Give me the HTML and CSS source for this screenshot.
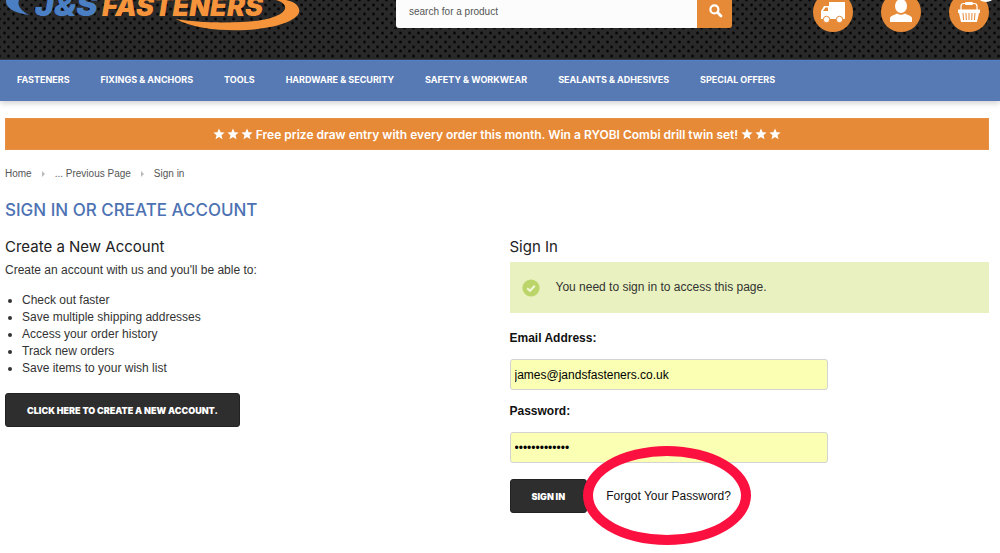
FILE: index.html
```html
<!DOCTYPE html>
<html lang="en">
<head>
<meta charset="utf-8">
<title>J&amp;S Fasteners - Sign in</title>
<meta name="viewport" content="width=device-width, initial-scale=1">
<link rel="stylesheet" href="styles.css">
</head>
<body>
<header class="header">
  <a class="logo" href="#" aria-label="J&amp;S Fasteners">
    <svg width="304" height="34" viewBox="0 0 304 34">
      <path fill="#4a7fc4" d="M6 0C5 7 13 13 29 15C20 10 17 5 19 0Z"/>
      <path fill="#f6943c" d="M276 0C294 5 287 20 242 22C216 23 194 22 176 19C194 29 222 31 246 30C282 28 302 18 299 9C298 4 292 1 286 0Z"/>
      <text class="logo-initials" x="35" y="16" fill="#4a7fc4">J&amp;S</text>
      <text class="logo-name" x="102" y="16" fill="#f6943c">FASTENERS</text>
    </svg>
  </a>
  <form class="search">
    <input class="search-input" type="text" placeholder="search for a product" aria-label="Search for a product">
    <button class="search-button" type="button" aria-label="Search">
      <svg width="14" height="14" viewBox="0 0 14 14"><circle cx="5.400" cy="5.400" r="4" fill="none" stroke="#fff" stroke-width="2.200"/><path d="M8.600 8.600L12 12" stroke="#fff" stroke-width="2.800" stroke-linecap="round"/></svg>
    </button>
  </form>
  <nav class="tools" aria-label="Account">
    <a href="#" aria-label="Delivery"><svg width="40" height="32" viewBox="0 0 40 32">
      <circle cx="20" cy="12" r="20" fill="#e78a37"/>
      <path fill="#fff" d="M16 2H32V19H8V11L11 6H16Z"/><path fill="#e78a37" d="M10 11L12.500 7.500H15V11Z"/>
      <circle cx="13.500" cy="19.500" r="3.200" fill="#fff" stroke="#e78a37"/><circle cx="26.500" cy="19.500" r="3.200" fill="#fff" stroke="#e78a37"/>
    </svg></a>
    <a href="#" aria-label="Account"><svg width="40" height="32" viewBox="0 0 40 32">
      <circle cx="20" cy="12" r="20" fill="#e78a37"/>
      <ellipse cx="20" cy="6" rx="6" ry="7" fill="#fff"/><path fill="#fff" d="M9 22V18C9 16 14 15 16 13.500Q20 16 24 13.500C26 15 31 16 31 18V22Z"/>
    </svg></a>
    <a href="#" aria-label="Basket"><svg width="45" height="32" viewBox="0 0 45 32">
      <circle cx="20" cy="12" r="20" fill="#e78a37"/>
      <path fill="none" stroke="#fff" stroke-width="1.200" d="M12 10V6Q12 3.500 15 3.500H25Q28 3.500 28 6V10"/><rect x="16" y="2" width="8" height="3" rx="1" fill="#fff"/>
      <path fill="#fff" d="M9 9.500H31V13H30L28 22H12L10 13H9Z"/>
      <path stroke="#e78a37" stroke-width="1" d="M14 13L14.600 20M17 13L17.300 20M20 13V20M23 13L22.700 20M26 13L25.400 20"/>
      <ellipse cx="37" cy="-4" rx="8" ry="6" fill="#fff"/>
    </svg></a>
  </nav>
</header>
<nav class="menu" aria-label="Products">
  <a href="#">FASTENERS</a><a href="#">FIXINGS &amp; ANCHORS</a><a href="#">TOOLS</a><a href="#">HARDWARE &amp; SECURITY</a><a href="#">SAFETY &amp; WORKWEAR</a><a href="#">SEALANTS &amp; ADHESIVES</a><a href="#">SPECIAL OFFERS</a>
</nav>
<main class="page">
  <p class="banner">
    <svg class="stars" width="40" height="12" viewBox="0 0 40 12"><path id="star" fill="#fff" d="M6 0.500L7.600 4.200L11.600 4.500L8.500 7.200L9.500 11.200L6 9L2.500 11.200L3.500 7.200L0.400 4.500L4.400 4.200Z"/><use href="#star" x="14"/><use href="#star" x="28"/></svg>
    <span>Free prize draw entry with every order this month. Win a RYOBI Combi drill twin set!</span>
    <svg class="stars" width="40" height="12" viewBox="0 0 40 12"><use href="#star"/><use href="#star" x="14"/><use href="#star" x="28"/></svg>
  </p>
  <nav class="crumbs" aria-label="Breadcrumb">
    <a href="#">Home</a><i class="arrow"></i><a href="#">... Previous Page</a><i class="arrow"></i><span>Sign in</span>
  </nav>
  <h1 class="title">SIGN IN OR CREATE ACCOUNT</h1>
  <div class="columns">
    <section>
      <h2 class="heading">Create a New Account</h2>
      <p class="intro">Create an account with us and you'll be able to:</p>
      <ul class="benefits">
        <li>Check out faster</li>
        <li>Save multiple shipping addresses</li>
        <li>Access your order history</li>
        <li>Track new orders</li>
        <li>Save items to your wish list</li>
      </ul>
      <button class="button" type="button">CLICK HERE TO CREATE A NEW ACCOUNT.</button>
    </section>
    <section>
      <h2 class="heading">Sign In</h2>
      <p class="notice">
        <svg width="18" height="18" viewBox="0 0 18 18"><circle cx="9" cy="9" r="8.600" fill="#bcd56b"/><path d="M5.200 9.200L8 11.800L12.800 6.800" fill="none" stroke="#f1f7d8" stroke-width="2"/></svg>
        <span>You need to sign in to access this page.</span>
      </p>
      <form class="login">
        <label for="email">Email Address:</label>
        <input id="email" class="field" type="email" value="james@jandsfasteners.co.uk">
        <label for="password">Password:</label>
        <input id="password" class="field" type="password" value="fastenersjs12">
        <div class="actions">
          <button class="button" type="button">SIGN IN</button>
          <a class="forgot" href="#">Forgot Your Password?<span class="ring"></span></a>
        </div>
      </form>
    </section>
  </div>
</main>
</body>
</html>
```
FILE: styles.css
```css
* { box-sizing: border-box; }
body {
  margin: 0;
  background: #fff;
  color: #333;
  font: 12px/17px "Liberation Sans", Arial, sans-serif;
}
a { color: inherit; text-decoration: none; }
h1, h2, p, ul { margin: 0; }
svg { display: block; }

.header {
  display: flex;
  align-items: flex-start;
  height: 60px;
  overflow: hidden;
  border-bottom: 1px solid #3a3f49;
  background-color: #292929;
  --dot: radial-gradient(circle, #000, #0c0c0c 1px, transparent 2px);
  background-image: var(--dot), var(--dot), var(--dot), var(--dot), var(--dot), var(--dot);
  background-size: 9px 28px;
  background-position: 0 0, 4px 5px, 0 9px, 4px 14px, 0 19px, 4px 23px;
}
.logo { width: 396px; }
.logo-initials { font: italic 900 32px Inter, sans-serif; }
.logo-name { font: italic 900 27px Inter, sans-serif; }
.search { display: flex; width: 336px; height: 28px; }
.search-input {
  flex: 1;
  min-width: 0;
  padding: 0 13px 6px;
  border: 0;
  border-radius: 0 0 0 3px;
  background: #fcfcfc;
  color: #555;
  font: 10px "Liberation Sans", Arial, sans-serif;
}
.search-input::placeholder { color: #555; opacity: 1; }
.search-button {
  width: 35px;
  padding: 4px 11px 10px 12px;
  border: 0;
  border-radius: 0 0 3px 0;
  background: #e78a37;
}
.tools { display: flex; gap: 28px; margin-left: auto; margin-right: 6px; }

.menu {
  display: flex;
  gap: 31px;
  padding: 0 17px 2px;
  border-top: 1px solid #4f80cc;
  background: #5779b4;
  box-shadow: 0 2px 6px #00000033;
  color: #fff;
  font: 700 9px/38px Inter, sans-serif;
  white-space: nowrap;
}

.page { padding: 17px 11px 40px 5px; }
.banner {
  display: flex;
  align-items: center;
  justify-content: center;
  gap: 3px;
  height: 32px;
  border: 1px solid #e78f45;
  background: #e78a37;
  color: #fff;
  font: 600 12px Inter, sans-serif;
}
.crumbs { display: flex; align-items: center; margin-top: 15px; color: #555; font-size: 10px; }
.arrow { margin: 0 10px; border: 3px solid transparent; border-left: 3px solid #bbb; border-right-width: 0; }
.title { margin-top: 16px; color: #4d72b3; font: 500 17px/24px Inter, sans-serif; }
.columns { display: grid; grid-template-columns: 1fr 1fr; gap: 25px; margin-top: 14px; }
.heading { color: #222; font: 400 15px/22px Inter, sans-serif; }
.intro { margin-top: 4px; }
.benefits { margin: 13px 0 16px; padding-left: 17px; }
.button {
  height: 34px;
  padding: 0 21px;
  border: 1px solid #222;
  border-radius: 3px;
  background: #2e2e2e;
  color: #fff;
  font: 900 9px Inter, sans-serif;
}
.notice {
  display: flex;
  align-items: center;
  gap: 16px;
  height: 51px;
  margin-top: 4px;
  padding: 0 12px;
  background: #e8f1bf;
}
.login { display: flex; flex-direction: column; margin-top: 17px; color: #111; }
.login label { font-weight: 700; }
.field {
  width: 318px;
  height: 31px;
  margin: 12px 0 13px;
  padding: 0 4px;
  border: 1px solid #d3d3d3;
  border-radius: 3px;
  background: #faffb4;
  color: #000;
  font: 12px "Liberation Sans", Arial, sans-serif;
}
.actions { display: flex; align-items: center; gap: 19px; margin-top: 3px; }
.forgot { position: relative; }
.ring {
  position: absolute;
  top: -42px;
  left: -23px;
  width: 168px;
  height: 99px;
  border: 10px solid #fc103f;
  border-radius: 50%;
}
```
